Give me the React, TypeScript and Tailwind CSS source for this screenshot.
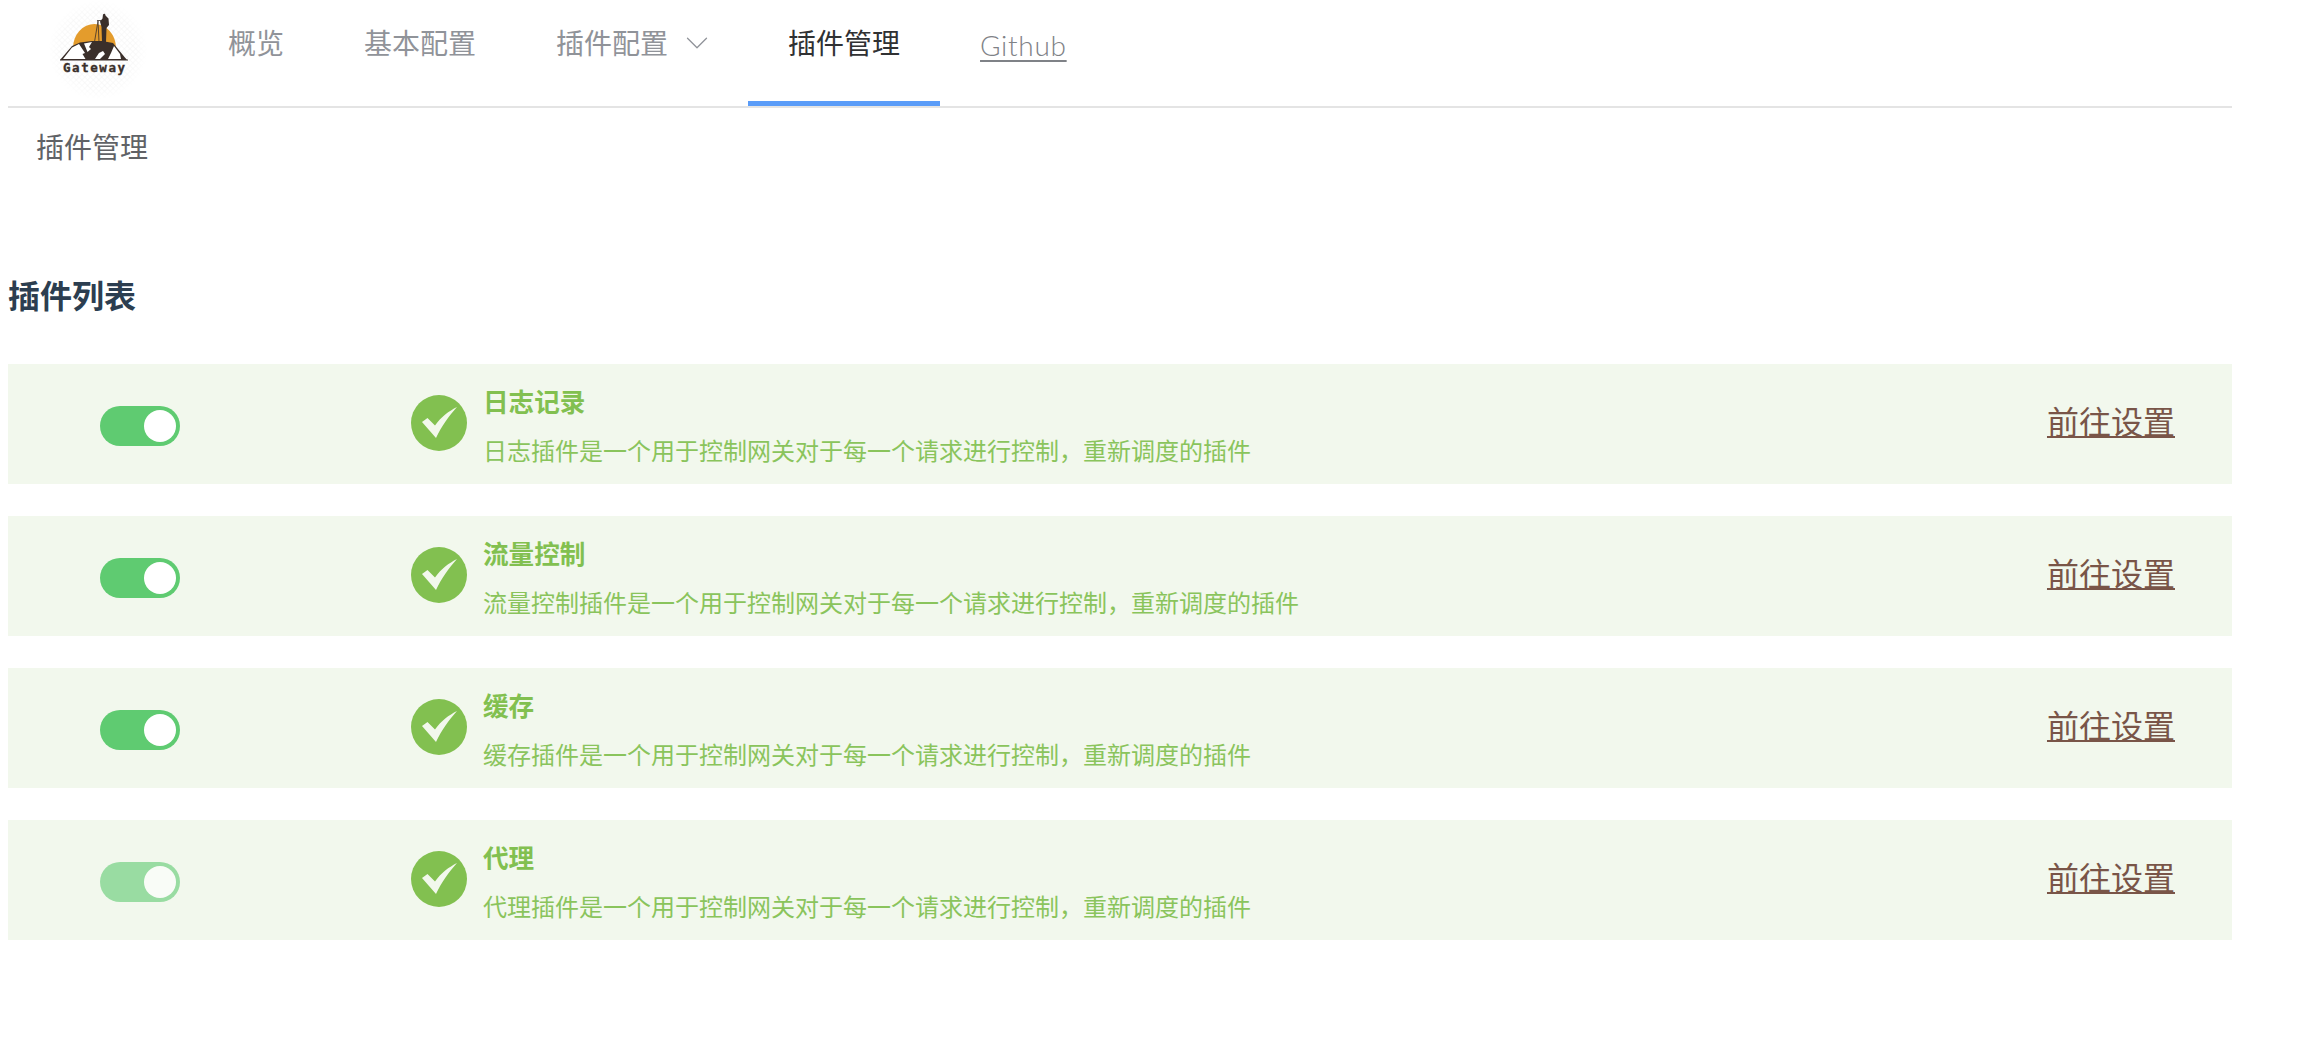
import { ChevronDown } from "lucide-react"

const cjk = "font-['Inter','Noto_Sans_CJK_SC',sans-serif]"

const plugins = [
  { name: "日志记录", desc: "日志插件是一个用于控制网关对于每一个请求进行控制，重新调度的插件", dim: false },
  { name: "流量控制", desc: "流量控制插件是一个用于控制网关对于每一个请求进行控制，重新调度的插件", dim: false },
  { name: "缓存", desc: "缓存插件是一个用于控制网关对于每一个请求进行控制，重新调度的插件", dim: false },
  { name: "代理", desc: "代理插件是一个用于控制网关对于每一个请求进行控制，重新调度的插件", dim: true },
]

function Logo() {
  return (
    <svg viewBox="0 0 100 100" className="w-[100px] h-[100px] shrink-0">
      <defs>
        <pattern id="hatch" width="4" height="4" patternUnits="userSpaceOnUse" patternTransform="rotate(45)">
          <rect width="4" height="4" fill="#ffffff" />
          <path d="M0 0H4M0 0V4" stroke="#f3f3f3" strokeWidth="1" />
        </pattern>
        <radialGradient id="fade">
          <stop offset="0.75" stopColor="#fff" />
          <stop offset="1" stopColor="#000" />
        </radialGradient>
        <mask id="fadeMask">
          <rect width="100" height="100" fill="url(#fade)" />
        </mask>
      </defs>
      <rect width="100" height="100" fill="url(#hatch)" mask="url(#fadeMask)" />
      <path d="M25 48A21.500 24 0 0 1 68 48L68 52H25Z" fill="#e49c2c" />
      <path d="M12 60L24 46L32 42.500L44 41L54 41L65 43L79 60Z" fill="#3a2f2a" />
      <path d="M15 59L24 47.500L31 44L37 53L34.500 54L37.500 59Z" fill="#fff" />
      <path d="M36 43.500L44 42L41 47L43 49L39.500 52Z" fill="#fff" />
      <path d="M47 59L51 53L55 51L57 54L52 59Z" fill="#fff" />
      <path d="M60 59L63 53L66 46L72 54L73 59Z" fill="#fff" />
      <rect x="12" y="59.500" width="68" height="1" fill="#3a2f2a" />
      <path d="M55 14.500C56 13 57.500 13.500 57.500 15.500L60.500 18.500L61 25L58.500 28L58 42L54 42L53.500 27L52 21.500L54.500 18.500Z" fill="#3a2f2a" />
      <path d="M49 20.500H53M50 21L46.500 42M50 21L51 42" stroke="#3a2f2a" strokeWidth="0.8" fill="none" />
      <text x="46" y="72" textAnchor="middle" fontFamily="'DejaVu Sans Mono', monospace" fontWeight="700" fontSize="12.500" fill="#3a2f2a" stroke="#3a2f2a" strokeWidth="0.35" textLength="62">Gateway</text>
    </svg>
  )
}

function CheckCircle() {
  return (
    <svg viewBox="0 0 56 56" className="w-14 h-14 shrink-0">
      <circle cx="28" cy="28" r="28" fill="#82c050" />
      <path d="M11 27L16.500 23L24 30.500C30 22 38 16 46 12C38 21 30 32 25 43Z" fill="#f2f8ec" />
    </svg>
  )
}

function Toggle({ dim }: { dim: boolean }) {
  return (
    <div className={`w-20 h-10 mt-1 rounded-full bg-[#5fcb71] p-1 flex justify-end shrink-0 ${dim ? "opacity-60" : ""}`}>
      <div className="w-8 h-8 rounded-full bg-white" />
    </div>
  )
}

export default function App() {
  return (
    <div className={`min-h-screen bg-white pl-2 w-[2232px] ${cjk}`}>
      <nav className="flex h-[108px] border-b-2 border-[#e4e4e4] pl-10">
        <Logo />
        <div className="flex text-[28px] text-[#909399] ml-10">
          <a className="px-10 leading-[88px]">概览</a>
          <a className="px-10 leading-[88px]">基本配置</a>
          <a className="pl-10 w-[232px] leading-[88px] flex items-start">
            插件配置
            <ChevronDown className="w-[38px] h-[38px] ml-[10px] mt-[24px]" strokeWidth={0.8} />
          </a>
          <a className="px-10 w-[192px] leading-[88px] text-[#303133] border-b-[5px] border-[#5a9cf8] h-[106px]">插件管理</a>
          <a className="pl-10 leading-[90px] font-['Lato',sans-serif] font-light tracking-[0.7px] text-[#7f8287]">
            <span className="underline underline-offset-4 decoration-2">Github</span>
          </a>
        </div>
      </nav>
      <div className="pl-[28px] text-[28px] text-[#606266] leading-[80px]">插件管理</div>
      <h2 className="mt-[79px] text-[32px] font-bold text-[#2c3e50] leading-[60px]">插件列表</h2>
      <div className="mt-[37px] flex flex-col gap-8">
        {plugins.map((p) => (
          <div key={p.name} className="h-[120px] bg-[#f2f8ed] flex items-center pl-[92px] pr-[57px]">
            <Toggle dim={p.dim} />
            <div className="ml-[231px] -mt-[2px]">
              <CheckCircle />
            </div>
            <div className="ml-[16px] flex-1 text-[#82c050] mt-[7px]">
              <div className="text-[25.6px] font-bold leading-[36px]">{p.name}</div>
              <div className="text-[24px] font-normal leading-[36px] mt-[13px] text-[#8ac45c]">{p.desc}</div>
            </div>
            <a className="text-[32px] text-[#795548] underline underline-offset-2 decoration-2 -mt-[2px]">前往设置</a>
          </div>
        ))}
      </div>
    </div>
  )
}
